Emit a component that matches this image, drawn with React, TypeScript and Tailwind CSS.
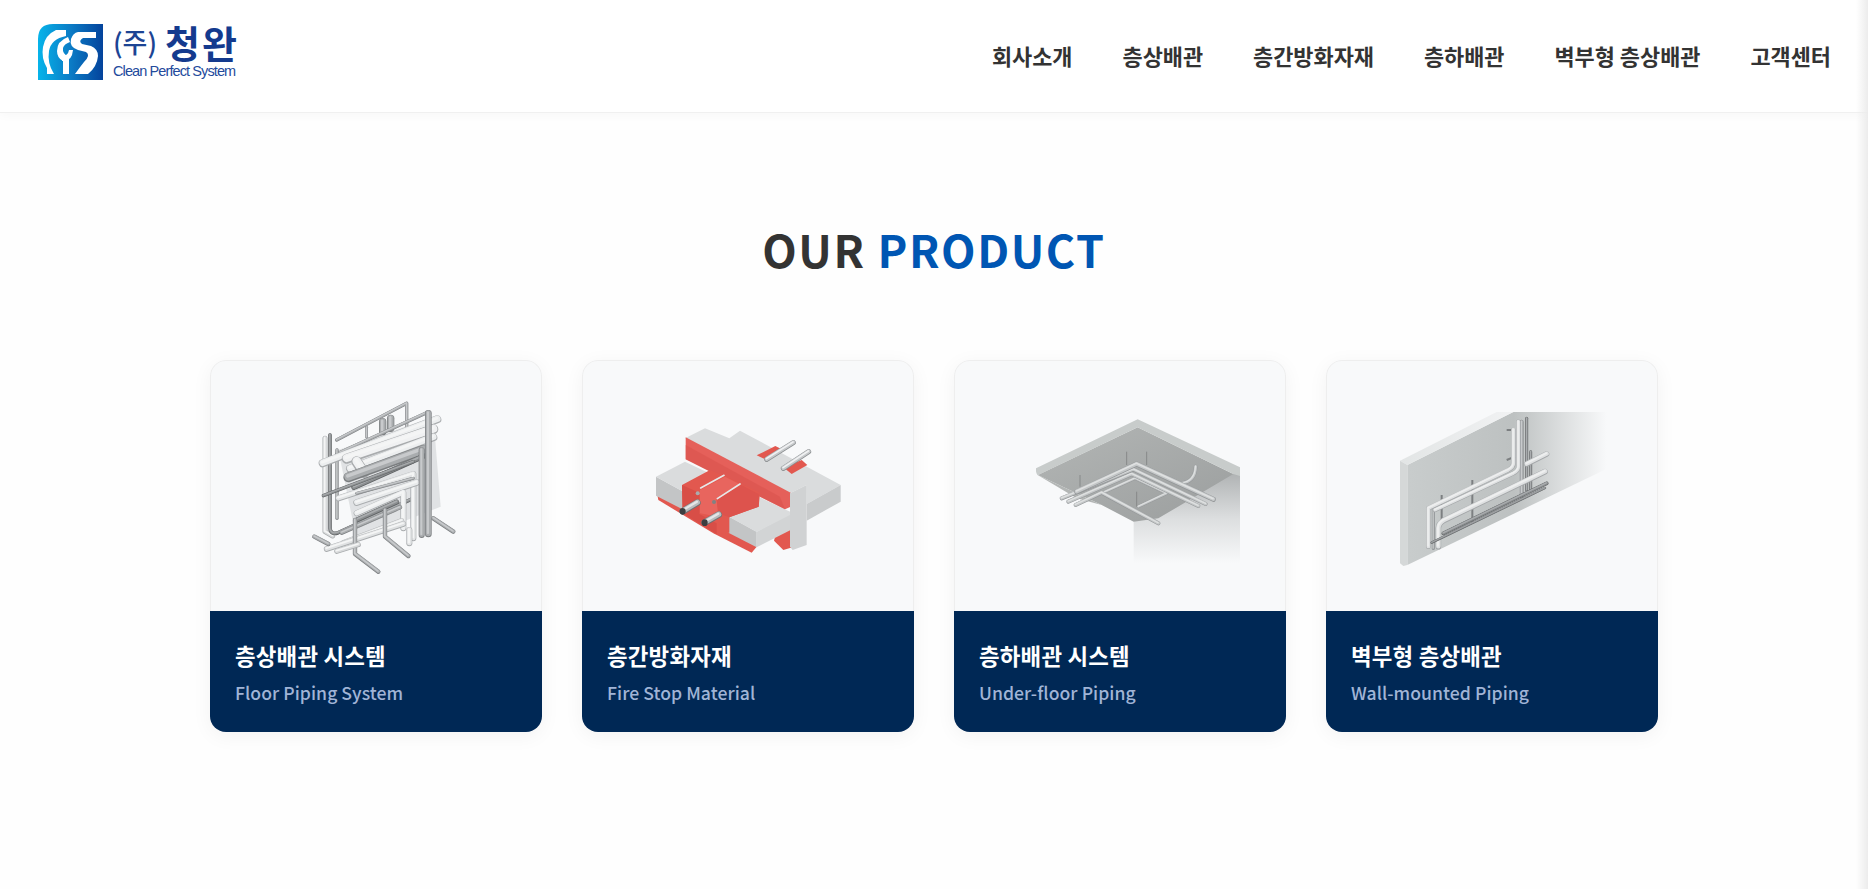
import React from "react";

const FONT = "font-['Noto_Sans_CJK_KR','Noto_Sans',sans-serif]";
const SVG = "-m-px block h-[251px] w-[332px]";

function Pipe({ d, w, c = "#e3e5e6", e = "#a9acae", h = "#f4f5f5" }: { d: string; w: number; c?: string; e?: string; h?: string }) {
  return (
    <g fill="none" strokeLinecap="round" strokeLinejoin="round">
      <path d={d} stroke={e} strokeWidth={w} />
      <path d={d} stroke={c} strokeWidth={w * 0.8} transform={`translate(0 ${-w * 0.06})`} />
      <path d={d} stroke={h} strokeWidth={w * 0.34} transform={`translate(${-w * 0.06} ${-w * 0.14})`} />
    </g>
  );
}
const G = { c: "#a9acae", e: "#7b7e80", h: "#c8cacc" };
const D = { c: "#8b8e90", e: "#5d6062", h: "#a9acae" };

function Logo() {
  return (
    <div className="mb-[8px] flex items-start gap-[9px]">
      <svg width="66" height="56" viewBox="0 0 66 56" className="block shrink-0">
        <defs>
          <linearGradient id="lg" x1="0" x2="1" y1="0" y2="0">
            <stop offset="0" stopColor="#06b4ea" />
            <stop offset="0.5" stopColor="#0b7cc6" />
            <stop offset="1" stopColor="#04439c" />
          </linearGradient>
        </defs>
        <path d="M15 0H65V56H0V15Q0 0 15 0Z" fill="url(#lg)" />
        <path d="M18 6H28V12Q13 15 11 27T16 50H9V44Q3 34 5 23 7 11 18 6Z" fill="#fff" />
        <path d="M30 13Q19 17 19 27 19 34 25 37L25 50H31V33Q24 30 25 24 26 20 32 18Z" fill="#fff" />
        <path d="M35 26Q34 38 24 37L24 32Q30 32 31 26Z" fill="#fff" />
        <path d="M58 8H40Q35 9 33 15 31 23 40 26L48 28Q53 31 46 38 42 43 37 50H50Q59 43 60 32 60 25 53 22L44 20Q40 17 45 14H58Z" fill="#fff" />
      </svg>
      <div className="-mt-[1px] flex flex-col text-[#1c4494]">
        <div className="flex h-[38px] items-center gap-[8px]">
          <span className="text-[27px] font-medium leading-[32px]">(주)</span>
          <span className="text-[38px] font-bold leading-[38px] tracking-[2px] text-[#143a8e]">청완</span>
        </div>
        <span className="mt-[2px] font-['Liberation_Sans',sans-serif] text-[14.5px] leading-[16px] tracking-[-0.9px] text-[#234a9c]">Clean Perfect System</span>
      </div>
    </div>
  );
}

function Img1() {
  return (
    <svg viewBox="30 30 996 753" className={SVG}>
      <path d="M415 300 L700 200 L722 470 L470 570 Z" fill="#dcdedf" opacity="0.85" />
      <Pipe d="M410 270 L620 160 L620 290" w={10} {...G} />
      <Pipe d="M500 232 L500 262" w={8} {...G} />
      <Pipe d="M548 215 L548 245" w={22} {...G} />
      <Pipe d="M572 205 L572 235" w={22} {...G} />
      <Pipe d="M410 312 L685 186" w={10} {...G} />
      <Pipe d="M375 265 L375 545 L398 558" w={15} c="#d8dadb" />
      <Pipe d="M390 255 L390 535 Q392 556 415 548 L640 445" w={11} {...D} />
      <Pipe d="M411 300 L411 505" w={10} {...G} />
      <Pipe d="M368 340 L712 208" w={24} c="#eceeef" />
      <Pipe d="M440 326 L700 238" w={30} c="#f0f1f2" />
      <Pipe d="M450 356 L700 262" w={24} c="#eceeef" />
      <Pipe d="M470 335 L492 368" w={32} c="#f0f1f2" />
      <Pipe d="M445 382 L670 300" w={30} {...G} />
      <Pipe d="M462 412 L668 320" w={16} {...D} />
      <Pipe d="M370 437 L640 335" w={10} {...D} />
      <Pipe d="M415 445 L640 372 L640 565" w={18} c="#e3e5e6" />
      <Pipe d="M470 458 L650 398" w={20} c="#e8eaeb" />
      <Pipe d="M470 430 L640 385" w={9} {...G} />
      <Pipe d="M685 190 L685 552" w={20} {...G} />
      <Pipe d="M665 300 L665 555" w={18} {...G} />
      <Pipe d="M470 490 L610 428 L610 535" w={18} c="#eceeef" />
      <Pipe d="M470 510 L590 456" w={15} {...D} />
      <Pipe d="M470 530 L585 480" w={12} c="#d8dadb" />
      <Pipe d="M425 548 L600 472" w={13} {...G} />
      <Pipe d="M430 578 L605 512" w={15} c="#e3e5e6" />
      <Pipe d="M380 597 L610 522" w={17} c="#dfe1e2" />
      <Pipe d="M465 510 L465 612 L535 665" w={13} {...G} />
      <Pipe d="M410 604 L475 584" w={15} c="#d8dadb" />
      <Pipe d="M555 480 L555 560 L625 618" w={13} {...G} />
      <Pipe d="M343 560 L385 582" w={13} {...G} />
      <Pipe d="M700 505 L760 545" w={13} {...G} />
      <Pipe d="M628 540 L628 580" w={18} c="#e3e5e6" />
    </svg>
  );
}

function Img2() {
  const r = "#e2584f";
  return (
    <svg viewBox="36 30 996 753" className={SVG}>
      <path d="M612 572L640 600 668 592 668 530 620 540Z" fill={r} />
      <path d="M345 265L405 235 478 265 510 242 812 405 710 462 710 405 660 430Z" fill="#dadcdd" />
      <path d="M710 462L812 405 812 455 710 512Z" fill="#c9cbcc" />
      <path d="M560 316L616 288 640 300 590 330Z" fill={r} />
      <path d="M640 352L695 330 712 345 665 372Z" fill={r} />
      <path d="M262 435L480 545 560 590 545 608 430 550 265 450Z" fill={r} />
      <path d="M258 380L560 545 560 592 258 437Z" fill="#c3c5c6" />
      <path d="M560 545L662 490 662 540 560 592Z" fill="#d2d4d5" />
      <path d="M258 380L345 335 670 490 560 546Z" fill="#dadcdd" />
      <path d="M347 262L662 428 662 470 645 478 347 328Z" fill="#e5605a" />
      <path d="M347 285L630 440 645 478 347 328Z" fill="#d9524c" opacity="0.55" />
      <path d="M336 405L420 360 465 378 570 428 566 470 478 502 478 548 440 552 338 490Z" fill={r} />
      <path d="M336 405L388 428 388 492 440 520 440 552 338 490Z" fill="#d84e47" />
      <path d="M390 420L465 380 512 404 440 450 445 500 390 490Z" fill="#e8655e" />
      <path d="M440 450L512 404 566 432 566 470 478 502 445 490Z" fill="#dd534d" />
      <path d="M392 414L462 376M442 446L510 402" stroke="#e6e8e9" strokeWidth="5" strokeLinecap="round" />
      <path d="M660 430L710 405 710 585 668 600 660 590Z" fill="#d0d2d3" />
      <Pipe d="M590 328L670 278" w={15} c="#c6c9cb" e="#8a8d8f" h="#f0f1f2" />
      <Pipe d="M640 355L716 305" w={15} c="#c6c9cb" e="#8a8d8f" h="#f0f1f2" />
      <Pipe d="M338 484L382 458" w={20} c="#b9bcbe" e="#6f7274" h="#e4e6e7" />
      <Pipe d="M404 518L446 494" w={20} c="#b9bcbe" e="#6f7274" h="#e4e6e7" />
      <ellipse cx="338" cy="484" rx="9" ry="10" fill="#3c3e40" />
      <ellipse cx="404" cy="518" rx="9" ry="10" fill="#3c3e40" />
      <circle cx="383" cy="430" r="6" fill="#a9acae" />
      <circle cx="432" cy="456" r="6" fill="#7f8284" />
    </svg>
  );
}

function Img3() {
  const P = { c: "#c4c7c8", e: "#939698", h: "#dfe1e1" };
  return (
    <svg viewBox="27 30 996 753" className={SVG}>
      <defs>
        <linearGradient id="w3" x1="0" x2="0" y1="0" y2="1">
          <stop offset="0" stopColor="#b0b3b4" />
          <stop offset="0.5" stopColor="#dcdedf" />
          <stop offset="1" stopColor="#f8f9fa" />
        </linearGradient>
        <linearGradient id="u3" x1="0" x2="1" y1="0" y2="1">
          <stop offset="0" stopColor="#b3b6b5" />
          <stop offset="1" stopColor="#9b9e9e" />
        </linearGradient>
      </defs>
      <path d="M566 515L865 370 885 375 885 640 566 640Z" fill="url(#w3)" />
      <path d="M278 375L578 232 865 372 640 505 566 515 470 465Z" fill="url(#u3)" />
      <path d="M278 375L470 465 395 445Z" fill="#b3b6b5" />
      <path d="M273 355L578 208 885 352 885 378 865 372 578 232 278 376Q272 370 273 355Z" fill="#c8cccb" />
      <path d="M545 305V345M605 305V345M575 425V470M405 375V410" stroke="#868989" strokeWidth="3" />
      <Pipe d="M710 400Q750 395 752 350" w={11} {...P} />
      <Pipe d="M470 430L570 385 665 430 580 470" w={9} {...P} />
      <Pipe d="M392 465L470 428 640 520" w={12} {...P} />
      <Pipe d="M370 455L560 372 760 468" w={12} {...P} />
      <Pipe d="M350 445L565 358 782 462" w={12} {...P} />
      <Pipe d="M395 425L575 342 805 448" w={15} {...P} />
    </svg>
  );
}

function Img4() {
  const W = { c: "#dfe1e2", e: "#a4a7a9", h: "#eeefef" };
  return (
    <svg viewBox="18 30 996 753" className={SVG}>
      <defs>
        <linearGradient id="w4" x1="240" x2="860" y1="0" y2="0" gradientUnits="userSpaceOnUse">
          <stop offset="0" stopColor="#c9cdcd" />
          <stop offset="0.55" stopColor="#bdc1c1" />
          <stop offset="1" stopColor="#f8f9fa" />
        </linearGradient>
        <linearGradient id="t4" x1="240" x2="600" y1="0" y2="0" gradientUnits="userSpaceOnUse">
          <stop offset="0" stopColor="#e2e5e5" />
          <stop offset="1" stopColor="#f2f3f4" />
        </linearGradient>
      </defs>
      <path d="M262 345L580 186 870 186 870 352 262 645Z" fill="url(#w4)" />
      <path d="M240 332L530 186 580 186 262 345Z" fill="url(#t4)" />
      <path d="M240 332L262 345 262 645 250 648 240 640Z" fill="#d5d8d8" />
      <path d="M365 435V520M457 390V515M560 240H580M560 330L585 320" stroke="#7c7f81" strokeWidth="6" />
      <Pipe d="M620 205V420" w={9} {...D} />
      <Pipe d="M605 215V440" w={11} {...G} />
      <Pipe d="M632 305V420" w={9} {...D} />
      <Pipe d="M340 470V595" w={9} {...G} />
      <Pipe d="M595 215V350Q595 362 580 370L345 480" w={13} {...W} />
      <Pipe d="M580 240V340Q580 352 565 360L325 475V590" w={14} {...W} />
      <Pipe d="M680 312L620 342" w={16} {...W} />
      <Pipe d="M680 400L370 550" w={11} {...D} />
      <Pipe d="M675 365L370 512Q355 522 355 535V590" w={17} {...W} />
      <Pipe d="M675 414L335 578" w={7} {...D} />
    </svg>
  );
}

const NAV = ["회사소개", "층상배관", "층간방화자재", "층하배관", "벽부형 층상배관", "고객센터"];

const CARDS = [
  { t: "층상배관 시스템", s: "Floor Piping System", I: Img1 },
  { t: "층간방화자재", s: "Fire Stop Material", I: Img2 },
  { t: "층하배관 시스템", s: "Under-floor Piping", I: Img3 },
  { t: "벽부형 층상배관", s: "Wall-mounted Piping", I: Img4 },
];

export default function App() {
  return (
    <div className={`relative flex h-[889px] flex-col overflow-hidden bg-[#fefefe] ${FONT}`}>
      <header className="flex h-[113px] shrink-0 items-center justify-between border-b border-[#f0f0f0] bg-white pl-[38px] pr-[37px] shadow-[0_2px_10px_rgba(0,0,0,0.03)]">
        <Logo />
        <nav className="flex gap-[50px]">
          {NAV.map((n) => (
            <span key={n} className="text-[21.9px] font-semibold leading-[32px] text-[#333]">
              {n}
            </span>
          ))}
        </nav>
      </header>
      <main className="flex flex-col items-center">
        <h2 className="mt-[103px] text-[44.8px] font-semibold leading-[66px] tracking-[1.6px] text-[#333]">
          OUR <span className="text-[#0056b3]">PRODUCT</span>
        </h2>
        <div className="mt-[78px] grid w-[1448px] grid-cols-4 gap-10">
          {CARDS.map(({ t, s, I }) => (
            <article key={t} className="flex h-[372px] flex-col overflow-hidden rounded-2xl bg-[#f8f9fa] shadow-[0_4px_20px_rgba(0,0,0,0.05)]">
              <div className="h-[251px] shrink-0 rounded-t-2xl border border-b-0 border-[#eeeeee]">
                <I />
              </div>
              <div className="flex-1 bg-[#002855] px-[25px] pt-[27px]">
                <div className="text-[22.4px] font-bold leading-[34px] tracking-[0.2px] text-white">{t}</div>
                <div className="mt-[8px] text-[17.6px] font-medium leading-[26px] tracking-[0.05px] text-[#a0b4d6]">{s}</div>
              </div>
            </article>
          ))}
        </div>
      </main>
      <div className="absolute inset-y-0 right-0 w-[12px] bg-gradient-to-r from-transparent to-[#ececec]" />
    </div>
  );
}
